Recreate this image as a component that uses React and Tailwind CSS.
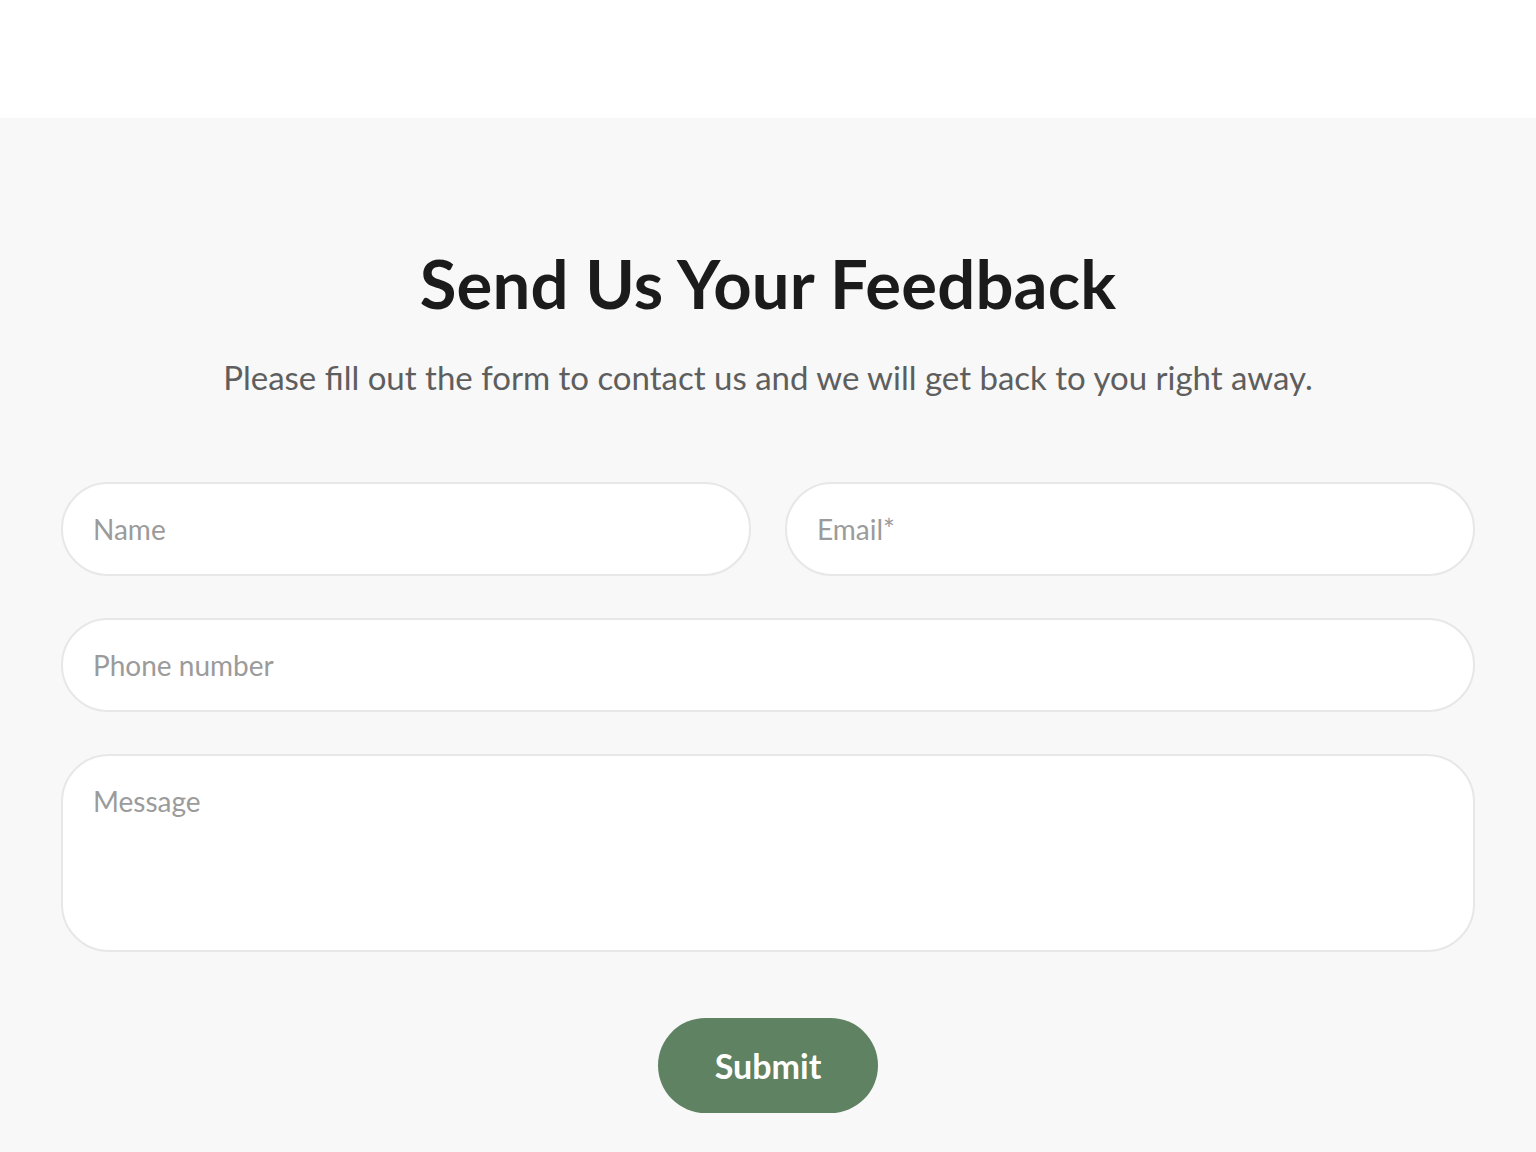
import React from 'react';

const font = { fontFamily: 'Lato, "Noto Sans", sans-serif' };

const fieldClass =
  'h-[94px] rounded-full border-2 border-[#e6e7e6] bg-white px-[30px] text-[28px] text-[#333] placeholder:text-[#9b9b9b] outline-none';

function App() {
  return (
    <div className="min-h-screen bg-white" style={font}>
      <div className="h-[118px] bg-white"></div>

      <section className="bg-[#f7f8f7] px-[61px] pt-[132px] pb-[40px]">
        <h1 className="text-center text-[67px] font-bold leading-none text-[#1b1b1b] tracking-[0.2px]">
          Send Us Your Feedback
        </h1>
        <p className="mt-[44px] text-center text-[33px] leading-none text-[#5e5e5e]">
          Please fill out the form to contact us and we will get back to you right away.
        </p>

        <form className="mt-[88px] flex flex-col gap-[42px]" onSubmit={(e) => e.preventDefault()}>
          <div className="grid grid-cols-2 gap-[34px]">
            <input type="text" placeholder="Name" className={fieldClass} />
            <input type="email" placeholder="Email*" className={fieldClass} />
          </div>
          <input type="tel" placeholder="Phone number" className={fieldClass} />
          <textarea
            placeholder="Message"
            className="h-[198px] resize-none rounded-[48px] border-2 border-[#e6e7e6] bg-white px-[30px] pt-[28px] text-[28px] leading-tight text-[#333] placeholder:text-[#9b9b9b] outline-none"
          ></textarea>

          <div className="flex justify-center pt-[24px]">
            <button
              type="submit"
              className="h-[95px] w-[220px] rounded-full bg-[#5f8262] text-[34px] font-bold text-white"
            >
              Submit
            </button>
          </div>
        </form>
      </section>
    </div>
  );
}

export default App;
